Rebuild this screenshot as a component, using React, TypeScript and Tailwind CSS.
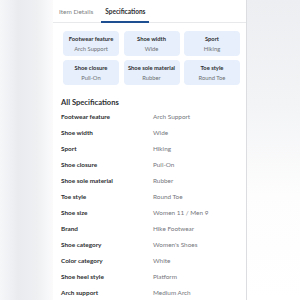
import React from "react";

const cards = [
  ["Footwear feature", "Arch Support"],
  ["Shoe width", "Wide"],
  ["Sport", "Hiking"],
  ["Shoe closure", "Pull-On"],
  ["Shoe sole material", "Rubber"],
  ["Toe style", "Round Toe"],
];

const rows = [
  ["Footwear feature", "Arch Support"],
  ["Shoe width", "Wide"],
  ["Sport", "Hiking"],
  ["Shoe closure", "Pull-On"],
  ["Shoe sole material", "Rubber"],
  ["Toe style", "Round Toe"],
  ["Shoe size", "Women 11 / Men 9"],
  ["Brand", "Hike Footwear"],
  ["Shoe category", "Women's Shoes"],
  ["Color category", "White"],
  ["Shoe heel style", "Platform"],
  ["Arch support", "Medium Arch"],
];

export default function App() {
  return (
    <div
      className="w-[300px] h-[300px] overflow-hidden flex bg-white"
      style={{ fontFamily: "Lato, 'Open Sans', sans-serif" }}
    >
      <div className="w-[53px] h-full bg-[linear-gradient(90deg,#f6f7f9_0%,#e9ebef_35%,#eef0f2_70%,#fbfbfc_100%)]" />
      <div className="w-[194px] h-full bg-white border-r border-[#dcdde0] flex flex-col">
        <div className="flex-none flex h-[23px] border-b border-[#e8e9ea] text-[6.5px]">
          <div className="ml-[6px] flex items-center text-[#7d7f84] pt-[2px]">Item Details</div>
          <div className="ml-[8px] px-[4px] flex items-center font-bold text-[#2e2f32] border-b-2 border-[#1d4f91] -mb-px pt-[2px]">
            Specifications
          </div>
        </div>
        <div className="flex-none mt-[8px] ml-[10px] w-[177px] grid grid-cols-3 gap-x-[4.5px] gap-y-[4px]">
          {cards.map(([t, v]) => (
            <div
              key={t}
              className="h-[25px] rounded-[4px] bg-[#e6effb] flex flex-col items-center justify-center gap-[2px]"
            >
              <div className="text-[5.8px] leading-[8px] font-bold text-[#2e2f32]">{t}</div>
              <div className="text-[5.8px] leading-[8px] text-[#6d6f74]">{v}</div>
            </div>
          ))}
        </div>
        <div className="flex-none mt-[12px] ml-[8px] text-[7.6px] leading-[10px] font-bold text-[#2e2f32]">
          All Specifications
        </div>
        <div className="flex-none mt-[2px] ml-[8px] flex flex-col">
          {rows.map(([l, v]) => (
            <div key={l} className="flex-none h-[16px] flex items-center text-[6.4px]">
              <div className="w-[92px] font-bold text-[#2e2f32]">{l}</div>
              <div className="text-[#74767c]">{v}</div>
            </div>
          ))}
        </div>
      </div>
      <div className="flex-1 h-full bg-[linear-gradient(180deg,#eceef1_0%,#f3f4f6_35%,#fdfdfd_65%,#ffffff_100%)]" />
    </div>
  );
}
